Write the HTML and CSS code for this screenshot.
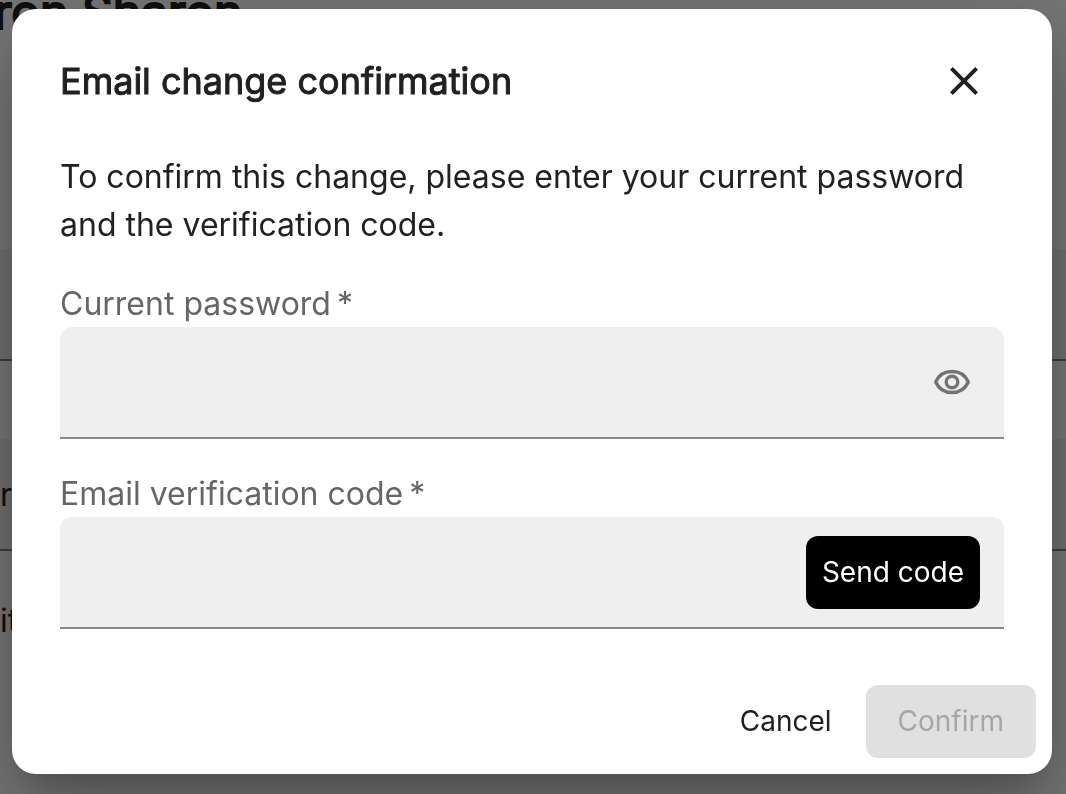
FILE: index.html
```html
<!DOCTYPE html>
<html lang="en">
<head>
<meta charset="utf-8">
<meta name="viewport" content="width=device-width, initial-scale=1">
<title>Email change confirmation</title>
<link rel="stylesheet" href="styles.css">
</head>
<body>
<main class="page" aria-hidden="true">
  <h1 class="page-title">ron Sharon</h1>
  <div class="page-field"></div>
  <div class="page-field page-field-next">r</div>
  <p class="page-note">it</p>
</main>
<div class="backdrop">
  <form class="dialog" role="dialog" aria-modal="true" aria-labelledby="dialog-title">
    <header class="dialog-header">
      <h2 class="dialog-title" id="dialog-title">Email change confirmation</h2>
      <button class="icon-button" type="button" aria-label="Close">
        <svg class="icon icon-close" viewBox="0 0 24 24" aria-hidden="true"><path fill="currentColor" d="M19 6.41 17.59 5 12 10.59 6.41 5 5 6.41 10.59 12 5 17.59 6.41 19 12 13.41 17.59 19 19 17.59 13.41 12z"/></svg>
      </button>
    </header>
    <div class="dialog-content">
      <p class="message">To confirm this change, please enter your current password and the verification code.</p>
      <div class="field">
        <label class="label" for="password">Current password<span class="required">*</span></label>
        <div class="control">
          <input class="input" id="password" type="password" required>
          <button class="icon-button icon-button-muted" type="button" aria-label="Show password">
            <svg class="icon" viewBox="0 0 40 40" fill="none" stroke="currentColor" stroke-width="3.4" aria-hidden="true"><path d="M3.7 20C6.6 13.4 12.8 9.5 20 9.5S33.4 13.4 36.3 20C33.4 26.6 27.2 30.5 20 30.5S6.6 26.6 3.7 20Z"/><circle cx="20" cy="20" r="5.8"/></svg>
          </button>
        </div>
      </div>
      <div class="field">
        <label class="label" for="code">Email verification code<span class="required">*</span></label>
        <div class="control">
          <input class="input" id="code" type="text" required>
          <button class="button button-dark" type="button">Send code</button>
        </div>
      </div>
    </div>
    <footer class="dialog-actions">
      <button class="button button-text" type="button">Cancel</button>
      <button class="button button-confirm" type="submit" disabled>Confirm</button>
    </footer>
  </form>
</div>
</body>
</html>
```
FILE: styles.css
```css
* {
  box-sizing: border-box;
}

body {
  margin: 0;
  overflow: hidden;
  background: #fff;
  color: #212121;
  font-family: Inter, "Liberation Sans", sans-serif;
  font-size: 32px;
  line-height: 48px;
}

h1,
h2,
p {
  margin: 0;
}

.page-title {
  margin-top: -20px;
  margin-left: -6px;
  font-size: 48px;
  font-weight: 400;
  line-height: 64px;
  -webkit-text-stroke: 2px currentColor;
}

.page-field {
  height: 112px;
  margin-top: 205px;
  padding-top: 32px;
  border-bottom: 2px solid #858585;
  background: #efefef;
}

.page-field-next {
  margin-top: 78px;
}

.page-note {
  margin-top: 46px;
}

.backdrop {
  position: fixed;
  inset: 0;
  display: flex;
  align-items: center;
  padding: 0 14px 11px 12px;
  background: rgba(0, 0, 0, 0.54);
}

.dialog {
  flex: 1;
  border-radius: 24px;
  background: #fff;
  box-shadow:
    0 22px 30px -14px rgba(0, 0, 0, 0.2),
    0 48px 76px 6px rgba(0, 0, 0, 0.14),
    0 18px 92px 16px rgba(0, 0, 0, 0.12);
}

.dialog-header {
  display: flex;
  align-items: center;
  justify-content: space-between;
  padding: 32px 48px;
}

.dialog-title {
  font-size: 36px;
  font-weight: 400;
  line-height: 80px;
  -webkit-text-stroke: 1px currentColor;
}

.dialog-content {
  padding: 0 48px;
}

.message {
  margin-bottom: 32px;
}

.field {
  margin-bottom: 32px;
}

.label {
  display: block;
  color: #666;
  line-height: 46px;
}

.required {
  margin-left: 6px;
}

.control {
  display: flex;
  align-items: center;
  height: 112px;
  padding-right: 24px;
  border-bottom: 2px solid #8c8888;
  border-radius: 12px 12px 0 0;
  background: #efefef;
}

.input {
  flex: 1;
  min-width: 0;
  height: 100%;
  padding: 0 24px;
  border: 0;
  outline: 0;
  background: transparent;
  color: inherit;
  font: inherit;
}

.icon-button {
  display: flex;
  padding: 16px;
  border: 0;
  background: transparent;
  color: #212121;
}

.icon-button-muted {
  padding: 8px;
  color: #737373;
}

.icon {
  width: 40px;
  height: 40px;
}

.icon-close {
  width: 48px;
  height: 48px;
}

.button {
  padding: 12px 16px;
  border: 0;
  border-radius: 12px;
  font: inherit;
  font-size: 28px;
  line-height: 49px;
}

.button-dark {
  background: #000;
  color: #fff;
}

.button-text {
  background: transparent;
  color: #212121;
}

.button-confirm {
  padding: 12px 32px;
  background: #e0e0e0;
  color: #a6a6a6;
}

.dialog-actions {
  display: flex;
  justify-content: flex-end;
  gap: 18px;
  padding: 24px 16px 16px;
}
```
